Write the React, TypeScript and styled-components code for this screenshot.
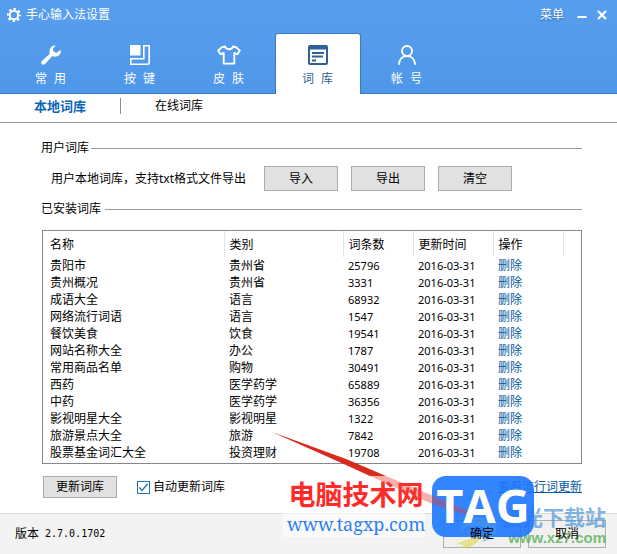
import React from "react";
import styled, { createGlobalStyle } from "styled-components";

const sans = `"Noto Sans", "Noto Sans CJK SC", sans-serif`;
const wide = `"Liberation Mono", "Noto Sans CJK SC", monospace`;

const GlobalStyle = createGlobalStyle`
  * { box-sizing: border-box; }
  body { margin: 0; background: #fff; color: #000; font: 12px/16px ${sans}; }
  button, input { font: inherit; color: inherit; margin: 0; }
`;

const Window = styled.div`
  position: relative;
  display: flex;
  flex-direction: column;
  min-height: 100vh;
  overflow: hidden;
`;

const Header = styled.header`
  background: linear-gradient(#579eef, #4f97e8);
  border-bottom: 1px solid #3b79c4;
  color: #fff;
`;

const TitleBar = styled.div`
  display: flex;
  align-items: center;
  gap: 5px;
  height: 33px;
  padding: 0 8px 4px 7px;
`;

const Title = styled.h1`
  flex: 1;
  margin: 0;
  font-size: 12px;
  font-weight: 400;
`;

const TitleButton = styled.button`
  display: flex;
  align-items: center;
  justify-content: center;
  min-width: 14px;
  padding: 0;
  border: 0;
  background: none;
  text-shadow: 0 1px 2px #2a62a8;
`;

const WindowControls = styled.div`
  display: flex;
  gap: 6px;
  padding-left: 6px;
`;

const MainTabs = styled.nav`
  display: flex;
  gap: 3px;
  padding-left: 8px;
  margin-bottom: -1px;
`;

const MainTab = styled.button<{ $active?: boolean }>`
  display: flex;
  flex-direction: column;
  align-items: center;
  gap: 7px;
  width: 86px;
  height: 61px;
  padding: 11px 1px 0 0;
  border: 1px solid ${(p) => (p.$active ? "#3b79c4" : "transparent")};
  border-bottom: 0;
  border-radius: 3px 3px 0 0;
  background: ${(p) => (p.$active ? "#fff" : "none")};
  color: ${(p) => (p.$active ? "#2f6196" : "#fff")};
  font-family: ${wide};
`;

const SubTabs = styled.nav`
  display: flex;
  align-items: center;
  height: 29px;
  padding: 0 34px 4px;
  border-bottom: 1px solid #9c9c9c;
`;

const SubTab = styled.button<{ $active?: boolean }>`
  padding: 0;
  border: 0;
  background: none;
  color: ${(p) => (p.$active ? "#0a66b7" : "#000")};
  font-size: ${(p) => (p.$active ? 13 : 12)}px;
  font-weight: ${(p) => (p.$active ? 700 : 400)};
`;

const SubDivider = styled.span`
  width: 1px;
  height: 16px;
  margin: 0 34px;
  background: #8e8e8e;
`;

const Content = styled.main`
  flex: 1;
  padding: 17px 35px 15px 41px;
`;

const Section = styled.section`
  display: flex;
  flex-direction: column;
`;

const SectionTitle = styled.h2<{ $gap: number }>`
  display: flex;
  align-items: center;
  gap: ${(p) => p.$gap}px;
  margin: 0;
  font-size: 12px;
  font-weight: 400;
  &::after {
    content: "";
    flex: 1;
    height: 1px;
    background: #9a9a9a;
  }
`;

const ActionRow = styled.div`
  display: flex;
  align-items: center;
  gap: 13px;
  padding: 10px 0;
`;

const ActionText = styled.p`
  width: 200px;
  margin: 0 0 0 10px;
  white-space: nowrap;
`;

const PushButton = styled.button<{ $height: number }>`
  width: 74px;
  height: ${(p) => p.$height}px;
  padding: 0;
  border: 1px solid #adadad;
  background: #e1e1e1;
`;

const TableFrame = styled.div`
  margin: 13px 0 12px 1px;
  padding-bottom: 2px;
  border: 1px solid #828790;
`;

const Table = styled.table`
  width: 100%;
  table-layout: fixed;
  border-collapse: collapse;
`;

const HeadCell = styled.th<{ $width?: number }>`
  width: ${(p) => (p.$width ? `${p.$width}px` : "auto")};
  height: 26px;
  padding: 1px 0 0 5px;
  border-right: 1px solid #e2e5e8;
  text-align: left;
  font-weight: 400;
  &:first-child { padding-left: 7px; }
  &:last-child { border-right: 0; }
`;

const Cell = styled.td<{ $numeric?: boolean }>`
  height: 17px;
  padding: 0 0 0 5px;
  font-size: ${(p) => (p.$numeric ? 11 : 12)}px;
  line-height: 17px;
  white-space: nowrap;
  &:first-child { padding-left: 7px; }
`;

const DeleteButton = styled.button`
  display: block;
  padding: 0;
  border: 0;
  background: none;
  color: #0459a0;
  line-height: 17px;
`;

const UpdateRow = styled.div`
  display: flex;
  align-items: center;
  gap: 20px;
  padding-left: 2px;
`;

const CheckLabel = styled.label`
  display: flex;
  flex: 1;
  align-items: center;
  gap: 3px;
`;

const CheckBoxWrap = styled.span`
  display: grid;
  > * { grid-area: 1 / 1; }
  > svg { pointer-events: none; }
`;

const Checkbox = styled.input`
  appearance: none;
  width: 13px;
  height: 13px;
  border: 1px solid #1c74b5;
  background: #fff;
  & + svg { visibility: hidden; }
  &:checked + svg { visibility: visible; }
`;

const UpdateLink = styled.a`
  color: #0459a0;
`;

const Footer = styled.footer`
  display: flex;
  align-items: center;
  gap: 7px;
  height: 41px;
  padding: 0 11px 0 15px;
  border-top: 1px solid #d9d9d9;
  background: #f3f3f3;
`;

const Version = styled.span`
  display: flex;
  flex: 1;
  gap: 6px;
`;

const VersionNumber = styled.span`
  font-family: "DejaVu Sans Mono", monospace;
  font-size: 10px;
`;

const DialogButton = styled.button`
  width: 78px;
  height: 28px;
  padding: 0;
  border: 1px solid #adadad;
  background: #f0f0f0;
`;

const RaisedLabel = styled.span`
  position: relative;
  z-index: 2;
`;

/* Promotional marks that float over the lower right of the window. */
const Overlay = styled.div`
  position: absolute;
  right: 0;
  bottom: 0;
  z-index: 1;
  width: 345px;
  height: 124px;
  pointer-events: none;
`;

const Layer = styled.svg`
  position: absolute;
  inset: 0;
`;

const SiteMark = styled.div`
  position: absolute;
  left: 11px;
  top: 46px;
  width: 142px;
  height: 61px;
  padding-left: 4px;
  background: rgba(255, 255, 255, 0.6);
  text-align: center;
  white-space: nowrap;
`;

const SiteName = styled.div`
  color: #ff2a2a;
  font: 700 27px/36px "Noto Sans CJK SC", sans-serif;
`;

const SiteUrl = styled.div`
  color: #2f7ff0;
  font: 18px/24px "Noto Serif", "DejaVu Serif", "Liberation Serif", serif;
`;

const TagText = styled.div`
  position: absolute;
  left: 160px;
  top: 45px;
  width: 102px;
  color: #fff;
  text-align: center;
  font: 700 47px/60px "Open Sans", "Noto Sans", sans-serif;
`;

const DownloadMark = styled.div`
  position: absolute;
  right: 11px;
  top: 74px;
  opacity: 0.75;
  text-align: right;
  white-space: nowrap;
`;

const DownloadName = styled.div`
  color: #5b9bd8;
  font: 700 21px/24px "Noto Sans CJK SC", sans-serif;
`;

const DownloadUrl = styled.div`
  color: #4fae50;
  font: 700 15px/20px "Liberation Sans", sans-serif;
`;

const GearIcon = () => (
  <svg width="14" height="14" viewBox="0 0 14 14" fill="none" stroke="#fff">
    <circle cx="7" cy="7" r="4.2" strokeWidth="2" />
    <circle cx="7" cy="7" r="6" strokeWidth="2" strokeDasharray="2.4 2.312" strokeDashoffset="1.2" />
  </svg>
);

const WrenchIcon = () => (
  <svg width="20" height="20" viewBox="0 0 20 20">
    <path
      fill="#fff"
      d="M14.5 0.3 11.8 4.2 13 7 15.8 7.8 19.7 4.8C20.3 8 18.4 11.2 15.2 11.6 13.7 11.8 12.3 11.4 11.4 11L4 19C3 20.1 1.5 20 .8 19.1 0 18.3 0 17 .9 16.1L8.8 8.8C7.6 4.4 10.2.4 14.5.3Z"
    />
  </svg>
);

const KeysIcon = () => (
  <svg width="20" height="20" viewBox="0 0 20 20" fill="none" stroke="#fff" strokeWidth="1.6">
    <rect x="0" y="0" width="10.5" height="10.5" fill="#fff" stroke="none" />
    <path d="M13.8.8H19.2V17.5Q19.2 19.2 17.5 19.2H.8V13.8H13.8Z" />
  </svg>
);

const ShirtIcon = () => (
  <svg width="24" height="20" viewBox="0 0 24 20" fill="none" stroke="#fff" strokeWidth="1.9" strokeLinejoin="round">
    <path d="M8 1.5C9 5.2 15 5.2 16 1.5L19 2.2 22.8 5.5 20.5 9.3 17.3 8V18.6H6.7V8L3.5 9.3 1.2 5.5 5 2.2Z" />
  </svg>
);

const DictionaryIcon = () => (
  <svg width="20" height="20" viewBox="0 0 20 20" fill="none" stroke="#2f6196">
    <rect x="1" y="1" width="18" height="18" rx="1" strokeWidth="2" />
    <path d="M1 2.5H19" strokeWidth="4" />
    <path d="M4 8H16M4 11.5H15M4 15.5H8" strokeWidth="1.8" />
  </svg>
);

const UserIcon = () => (
  <svg width="20" height="20" viewBox="0 0 20 20" fill="none" stroke="#fff" strokeWidth="1.9">
    <circle cx="10" cy="6" r="5" />
    <path d="M1.9 19.8C2 14.2 5.4 11 10 11S18 14.2 18.1 19.8" />
  </svg>
);

const tabs = [
  { label: "常 用", icon: <WrenchIcon /> },
  { label: "按 键", icon: <KeysIcon /> },
  { label: "皮 肤", icon: <ShirtIcon /> },
  { label: "词 库", icon: <DictionaryIcon />, active: true },
  { label: "帐 号", icon: <UserIcon /> },
];

const rows: [string, string, number][] = [
  ["贵阳市", "贵州省", 25796],
  ["贵州概况", "贵州省", 3331],
  ["成语大全", "语言", 68932],
  ["网络流行词语", "语言", 1547],
  ["餐饮美食", "饮食", 19541],
  ["网站名称大全", "办公", 1787],
  ["常用商品名单", "购物", 30491],
  ["西药", "医学药学", 65889],
  ["中药", "医学药学", 36356],
  ["影视明星大全", "影视明星", 1322],
  ["旅游景点大全", "旅游", 7842],
  ["股票基金词汇大全", "投资理财", 19708],
];

export default function App() {
  return (
    <Window lang="zh-CN">
      <GlobalStyle />
      <Header>
        <TitleBar>
          <GearIcon />
          <Title>手心输入法设置</Title>
          <TitleButton>菜单</TitleButton>
          <WindowControls>
            <TitleButton aria-label="最小化">
              <svg width="10" height="10" viewBox="0 0 10 10">
                <path d="M0.5 7H9.5" stroke="#fff" strokeWidth="2" />
              </svg>
            </TitleButton>
            <TitleButton aria-label="关闭">
              <svg width="10" height="10" viewBox="0 0 10 10">
                <path d="M1 1 9 9M9 1 1 9" stroke="#fff" strokeWidth="2.2" />
              </svg>
            </TitleButton>
          </WindowControls>
        </TitleBar>
        <MainTabs>
          {tabs.map((t) => (
            <MainTab key={t.label} $active={t.active}>
              {t.icon}
              {t.label}
            </MainTab>
          ))}
        </MainTabs>
      </Header>

      <SubTabs>
        <SubTab $active>本地词库</SubTab>
        <SubDivider />
        <SubTab>在线词库</SubTab>
      </SubTabs>

      <Content>
        <Section>
          <SectionTitle $gap={2}>用户词库</SectionTitle>
          <ActionRow>
            <ActionText>用户本地词库，支持txt格式文件导出</ActionText>
            <PushButton $height={25}>导入</PushButton>
            <PushButton $height={25}>导出</PushButton>
            <PushButton $height={25}>清空</PushButton>
          </ActionRow>
        </Section>
        <Section>
          <SectionTitle $gap={4}>已安装词库</SectionTitle>
          <TableFrame>
            <Table>
              <thead>
                <tr>
                  <HeadCell $width={181}>名称</HeadCell>
                  <HeadCell $width={119}>类别</HeadCell>
                  <HeadCell $width={70}>词条数</HeadCell>
                  <HeadCell $width={80}>更新时间</HeadCell>
                  <HeadCell $width={70}>操作</HeadCell>
                  <HeadCell aria-hidden="true" />
                </tr>
              </thead>
              <tbody>
                {rows.map(([name, kind, count]) => (
                  <tr key={name}>
                    <Cell>{name}</Cell>
                    <Cell>{kind}</Cell>
                    <Cell $numeric>{count}</Cell>
                    <Cell $numeric>2016-03-31</Cell>
                    <Cell>
                      <DeleteButton>删除</DeleteButton>
                    </Cell>
                    <Cell />
                  </tr>
                ))}
              </tbody>
            </Table>
          </TableFrame>
          <UpdateRow>
            <PushButton $height={22}>更新词库</PushButton>
            <CheckLabel>
              <CheckBoxWrap>
                <Checkbox type="checkbox" defaultChecked />
                <svg width="13" height="13" viewBox="0 0 13 13" fill="none">
                  <path d="M2.5 6.5 5 9.5 10.5 3" stroke="#1c74b5" strokeWidth="1.4" />
                </svg>
              </CheckBoxWrap>
              自动更新词库
            </CheckLabel>
            <UpdateLink href="#updates">查看流行词更新</UpdateLink>
          </UpdateRow>
        </Section>
      </Content>

      <Footer>
        <Version>
          版本 <VersionNumber>2.7.0.1702</VersionNumber>
        </Version>
        <DialogButton>
          <RaisedLabel>确定</RaisedLabel>
        </DialogButton>
        <DialogButton>
          <RaisedLabel>取消</RaisedLabel>
        </DialogButton>
      </Footer>

      <Overlay>
        <SiteMark>
          <SiteName>电脑技术网</SiteName>
          <SiteUrl>www.tagxp.com</SiteUrl>
        </SiteMark>
        <DownloadMark>
          <DownloadName>极光下载站</DownloadName>
          <DownloadUrl>www.xz7.com</DownloadUrl>
        </DownloadMark>
        <Layer width="345" height="124" viewBox="0 0 345 124">
          <rect x="160" y="46" width="102" height="61" rx="14" fill="#1d77ff" opacity="0.9" />
          <path d="M0 2 74 29 114 46 98 46 74 35Z" fill="#d92a1c" />
          <path d="M114 46 202 83 201 87 158 73 98 46Z" fill="#e8392c" opacity="0.4" />
          <path d="M189 104C186 92 202 84 216 89 230 94 227 107 210 112 218 104 216 97 207 96 197 95 190 98 189 104Z" fill="#4a9be0" opacity="0.5" />
          <path d="M185 114C194 108 204 110 209 105 208 113 198 119 188 118L192 115Z" fill="#d6d94a" opacity="0.6" />
        </Layer>
        <TagText>TAG</TagText>
      </Overlay>
    </Window>
  );
}
